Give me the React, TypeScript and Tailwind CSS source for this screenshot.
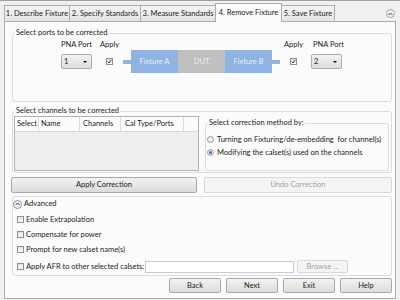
import React from "react";

const Check = ({ checked = false }: { checked?: boolean }) => (
  <span className="flex h-[7px] w-[7px] shrink-0 items-center justify-center border border-[#8e8f8f] bg-linear-to-b from-[#e4e4e4] to-[#fbfbfb]">
    {checked && (
      <svg width="5" height="5" viewBox="0 0 5 5">
        <path d="M0.8 2.6 L2 4 L4.3 0.8" fill="none" stroke="#1f2f6b" strokeWidth="1" />
      </svg>
    )}
  </span>
);

const Radio = ({ on = false }: { on?: boolean }) => (
  <span className="flex h-[7px] w-[7px] shrink-0 items-center justify-center rounded-full border border-[#9a9a9a] bg-[#eeeeee]">
    {on && <span className="h-[3px] w-[3px] rounded-full bg-[#2f6fb8]" />}
  </span>
);

const Dropdown = ({ value }: { value: string }) => (
  <div className="mt-[4px] flex h-[15px] w-[31px] items-center justify-between rounded-[2px] border border-[#acacac] bg-linear-to-b from-[#f3f3f3] to-[#dddddd] pl-[2px] pr-[4px]">
    <span>{value}</span>
    <span className="h-0 w-0 border-x-[2px] border-t-[2px] border-x-transparent border-t-black" />
  </div>
);

const Btn = ({ label, className = "", disabled = false }: { label: string; className?: string; disabled?: boolean }) => (
  <button
    className={
      disabled
        ? `flex items-center justify-center rounded-[2px] border border-[#d9d9d9] bg-[#f4f4f4] text-[#a3a3a3] ${className}`
        : `flex items-center justify-center rounded-[2px] border border-[#a9a9a9] bg-linear-to-b from-[#f3f3f3] to-[#dcdcdc] ${className}`
    }
  >
    {label}
  </button>
);

const tabs = [
  { label: "1. Describe Fixture", w: "w-[66px]" },
  { label: "2. Specify Standards", w: "w-[72px]" },
  { label: "3. Measure Standards", w: "w-[76px]" },
];

export default function App() {
  return (
    <div className="h-[300px] w-[400px] overflow-hidden whitespace-nowrap border-t border-[#a0a0a0] bg-[#f0f0f0] font-['Lato','Noto_Sans',sans-serif] text-[7.5px] leading-[10px] text-[#1b1b1b]">
      {/* tab strip */}
      <div className="flex h-[20px] items-end pl-[4px]">
        {tabs.map((t, i) => (
          <div
            key={t.label}
            className={`flex h-[16px] items-center justify-center border border-b-0 border-[#adadad] bg-linear-to-b from-[#f4f4f4] to-[#e4e4e4] ${t.w} ${i > 0 ? "-ml-px" : ""}`}
          >
            {t.label}
          </div>
        ))}
        <div className="relative z-10 -mb-px -ml-px flex h-[19px] w-[67px] items-center justify-center border border-b-0 border-[#adadad] bg-[#fbfbfb]">
          4. Remove Fixture
        </div>
        <div className="-ml-px flex h-[16px] w-[54px] items-center justify-center border border-b-0 border-[#adadad] bg-linear-to-b from-[#f4f4f4] to-[#e4e4e4]">
          5. Save Fixture
        </div>
        <div className="mb-[3px] ml-auto mr-[5px] flex h-[9px] w-[9px] items-center justify-center self-end rounded-full border border-[#9aa7b5] bg-[#f7f7f7]">
          <svg width="5" height="4" viewBox="0 0 5 4">
            <path d="M0.5 3 L2.5 1 L4.5 3" fill="none" stroke="#333" strokeWidth="1" />
          </svg>
        </div>
      </div>

      {/* panel */}
      <div className="ml-[4px] h-[278px] w-[392px] border border-[#adadad] bg-[#fbfbfb]">
        {/* ports */}
        <fieldset className="ml-[7px] mt-[6px] h-[74px] w-[380px] rounded-[3px] border border-[#d8dee3]">
          <legend className="ml-[2px] px-[1px] leading-[10px]">Select ports to be corrected</legend>
          <div className="flex items-start pl-[48px] pt-[2px]">
            <div className="flex w-[31px] flex-col">
              <span>PNA Port</span>
              <Dropdown value="1" />
            </div>
            <div className="ml-[8px] flex w-[19px] flex-col items-center">
              <span>Apply</span>
              <div className="mt-[8px]">
                <Check checked />
              </div>
            </div>
            <div className="ml-[4px] mt-[10px] flex items-center">
              <div className="h-[4px] w-[8px] bg-[#8fb4e3]" />
              <div className="flex h-[23px] w-[47px] items-center justify-center bg-[#8fb4e3] text-[#e8f0fa]">Fixture A</div>
              <div className="flex h-[23px] w-[47px] items-center justify-center bg-[#c0c0c0] text-[#ececec]">DUT</div>
              <div className="flex h-[23px] w-[47px] items-center justify-center bg-[#8fb4e3] text-[#e8f0fa]">Fixture B</div>
              <div className="h-[4px] w-[8px] bg-[#8fb4e3]" />
            </div>
            <div className="ml-[4px] flex w-[19px] flex-col items-center">
              <span>Apply</span>
              <div className="mt-[8px]">
                <Check checked />
              </div>
            </div>
            <div className="ml-[8px] flex w-[31px] flex-col">
              <span className="pl-[2px]">PNA Port</span>
              <Dropdown value="2" />
            </div>
          </div>
        </fieldset>

        {/* channels */}
        <fieldset className="ml-[7px] mt-[4px] h-[67px] w-[380px] rounded-[3px] border border-[#d8dee3]">
          <legend className="ml-[2px] px-[1px] leading-[10px]">Select channels to be corrected</legend>
          <div className="flex items-start">
            <div className="ml-[1px] flex h-[55px] w-[185px] flex-col border border-[#b4b4b4] bg-[#efefef]">
              <div className="flex h-[15px] border-b border-[#d6d6d6] bg-[#fbfbfb]">
                <div className="flex w-[24px] items-center border-r border-[#dcdcdc] pl-[2px]">Select</div>
                <div className="flex w-[41px] items-center border-r border-[#dcdcdc] pl-[2px]">Name</div>
                <div className="flex w-[41px] items-center border-r border-[#dcdcdc] pl-[3px]">Channels</div>
                <div className="flex w-[63px] items-center border-r border-[#dcdcdc] pl-[4px]">Cal Type/Ports</div>
                <div className="flex-1" />
              </div>
            </div>
            <fieldset className="ml-[6px] mt-[2px] h-[53px] w-[184px] rounded-[3px] border border-[#d8dee3]">
              <legend className="ml-[2px] px-[1px] leading-[10px]">Select correction method by:</legend>
              <div className="flex flex-col pl-[1px] pt-[5px]">
                <div className="flex h-[13px] items-center gap-[3px]">
                  <Radio />
                  <span>Turning on Fixturing/de-embedding&nbsp; for channel(s)</span>
                </div>
                <div className="flex h-[13px] items-center gap-[3px]">
                  <Radio on />
                  <span>Modifying the calset(s) used on the channels</span>
                </div>
              </div>
            </fieldset>
          </div>
        </fieldset>

        {/* apply / undo */}
        <div className="mt-[4px] flex">
          <Btn label="Apply Correction" className="ml-[6px] h-[16px] w-[186px]" />
          <Btn label="Undo Correction" disabled className="ml-[7px] h-[16px] w-[188px]" />
        </div>

        {/* advanced */}
        <div className="ml-[7px] mt-[3px] h-[80px] w-[380px] rounded-[3px] border border-[#d8dee3]">
          <div className="flex items-center gap-[2px] pt-[2px]">
            <div className="flex h-[9px] w-[9px] items-center justify-center rounded-full border border-[#7f93a8] bg-[#f7f7f7]">
              <svg width="5" height="4" viewBox="0 0 5 4">
                <path d="M0.5 3 L2.5 1 L4.5 3" fill="none" stroke="#1f2f50" strokeWidth="1" />
              </svg>
            </div>
            <span>Advanced</span>
          </div>
          <div className="mt-[3px] flex flex-col pl-[4px]">
            <div className="flex h-[15px] items-center gap-[2px]">
              <Check />
              <span>Enable Extrapolation</span>
            </div>
            <div className="flex h-[15px] items-center gap-[2px]">
              <Check />
              <span>Compensate for power</span>
            </div>
            <div className="flex h-[15px] items-center gap-[2px]">
              <Check />
              <span>Prompt for new calset name(s)</span>
            </div>
            <div className="mt-[3px] flex h-[13px] items-center gap-[2px]">
              <Check />
              <span className="w-[117px]">Apply AFR to other selected calsets:</span>
              <div className="h-[12px] w-[149px] border border-[#c8cbd0] bg-white" />
              <Btn label="Browse ..." disabled className="ml-[1px] h-[13px] w-[51px]" />
            </div>
          </div>
        </div>

        {/* nav */}
        <div className="mt-[2px] flex justify-end gap-[5px] pr-[3px]">
          <Btn label="Back" className="h-[15px] w-[52px]" />
          <Btn label="Next" className="h-[15px] w-[52px]" />
          <Btn label="Exit" className="h-[15px] w-[52px]" />
          <Btn label="Help" className="h-[15px] w-[52px]" />
        </div>
      </div>
    </div>
  );
}
